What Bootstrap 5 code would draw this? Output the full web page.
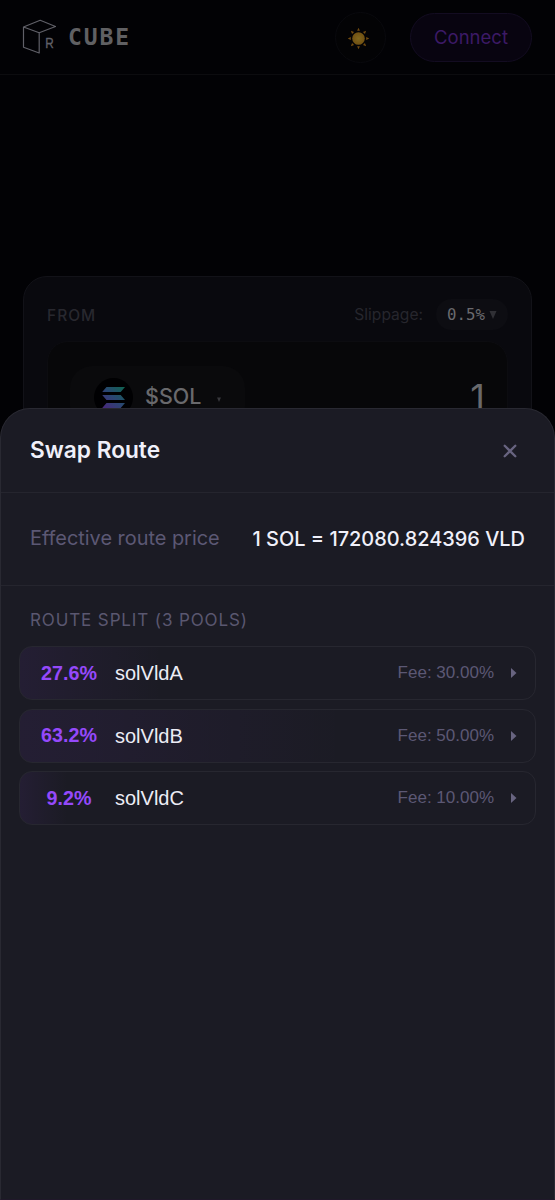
<!DOCTYPE html>
<html lang="en" data-bs-theme="dark">
<head>
<meta charset="utf-8">
<meta name="viewport" content="width=device-width, initial-scale=1">
<title>Cube – Swap Route</title>
<link rel="stylesheet" href="https://cdn.jsdelivr.net/npm/bootstrap@5.3.0/dist/css/bootstrap.min.css">
<style>
  body { font-family: Inter, "Liberation Sans", sans-serif; background: #020205; color: #717175; height: 1200px; overflow: hidden; }
  .topbar { height: 75px; padding: 0 23px 0 22px; border-bottom: 1px solid #0c0c0f; }
  .wordmark { font: bold 23px/1 "DejaVu Sans Mono", monospace; letter-spacing: 1.9px; color: #606063; margin-left: 11px; }
  .theme-btn { width: 51px; height: 51px; border: 1px solid #09090d; background: #030305; }
  .connect-btn { width: 122px; height: 49px; border: 1.5px solid #130c21; background: #080410; color: #3c1a66; font-size: 18.5px; padding: 2px 0 0; }
  .swap-panel { margin: 201px 23px 0; height: 330px; border: 1px solid #121218; border-radius: 24px; background: #09090e; padding: 22px 23px; }
  .from-label { font-size: 15.5px; font-weight: 500; letter-spacing: 1px; color: #28282f; padding-top: 2px; }
  .slip-label { font-size: 15.6px; color: #26262d; }
  .slip-pill { width: 72px; height: 31px; margin-left: 13px; background: #0d0d12; font: 15.7px/1 "DejaVu Sans Mono", monospace; color: #6a6a6e; }
  .token-box { margin-top: 11px; height: 180px; border: 1px solid #0c0c10; border-radius: 21px; background: #070709; padding: 24px 22px; }
  .token-pill { width: 175px; height: 62px; border-radius: 22px; background: #0a0a0c; padding-left: 24px; }
  .token-name { font-size: 21.5px; font-weight: 500; color: #69696c; margin-left: 12px; line-height: 1; }
  .amount { font-size: 36px; line-height: 62px; color: #69696c; }
  .sheet { height: 792px; border: 1px solid #292932; border-bottom: 1px solid #20182a; border-radius: 30px 30px 0 0; background: #1b1b24; }
  .sheet-head { height: 84px; padding: 0 36px 0 29px; border-bottom: 1.5px solid #25252e; }
  .sheet-head h1 { font-size: 22.7px; font-weight: 600; color: #f0f0fa; line-height: 1; }
  .price-row { height: 93px; padding: 0 29px; border-bottom: 1.5px solid #25252e; font-size: 19.9px; }
  .dim { color: #5c5874; }
  .price { color: #f0f0fa; font-weight: 500; padding-top: 1px; font-size: 19.95px; }
  .split-title { font-size: 17px; letter-spacing: .88px; line-height: 20px; margin: 24px 29px 16px; color: #5a5770; }
  .pools { margin: 0 18px; gap: 8.5px; font-family: "Liberation Sans", Arial, sans-serif; }
  .pool { height: 54px; border: 1.5px solid #272730; border-radius: 13px; padding: 0 18px 0 14px;
    background: linear-gradient(90deg, rgba(153,69,255,.07), rgba(153,69,255,0) var(--share)); }
  .pct { width: 70px; font-size: 19.7px; font-weight: 700; color: #9549fb; padding-top: 1px; }
  .pool-name { font-size: 20px; margin-left: 11px; color: #ececf5; }
  .fee { font-size: 17px; margin-right: 17px; }
</style>
</head>
<body>
<header class="topbar d-flex align-items-center">
  <svg width="35" height="36" viewBox="0 0 35 36" fill="none" stroke="#606068" stroke-width="1.2" stroke-linejoin="round">
    <path d="M1.5 8 18.2 1.3 33.5 7.5 17.2 13.8Z M1.5 8V28.2L17.2 34V13.8"/>
    <text x="23.2" y="28.5" font-family="Liberation Sans, sans-serif" font-size="14.5" textLength="8.5" lengthAdjust="spacingAndGlyphs" fill="#606068" stroke="#606068" stroke-width=".35">R</text>
  </svg>
  <span class="wordmark">CUBE</span>
  <div class="theme-btn rounded-circle d-flex align-items-center justify-content-center ms-auto">
    <svg width="22" height="22" viewBox="-11 -11 22 22" style="transform:translate(-2.5px,1.5px)">
      <defs><radialGradient id="sun"><stop stop-color="#80671f"/><stop offset="1" stop-color="#705012"/></radialGradient>
      <path id="ray" d="M-1.4-7.7H1.4L0-10.8Z"/></defs>
      <circle r="6.3" fill="url(#sun)"/>
      <g fill="#704a10"><use href="#ray"/><use href="#ray" transform="rotate(45)"/><use href="#ray" transform="rotate(90)"/><use href="#ray" transform="rotate(135)"/><use href="#ray" transform="rotate(180)"/><use href="#ray" transform="rotate(225)"/><use href="#ray" transform="rotate(270)"/><use href="#ray" transform="rotate(315)"/></g>
    </svg>
  </div>
  <button class="connect-btn rounded-pill ms-4">Connect</button>
</header>
<main class="swap-panel">
  <div class="d-flex align-items-center">
    <span class="from-label">FROM</span>
    <span class="slip-label ms-auto">Slippage:</span>
    <span class="slip-pill rounded-pill d-flex align-items-center justify-content-center gap-1">0.5%
      <svg width="8" height="8" viewBox="0 0 8 8"><path fill="#303035" d="M.5 0h7L4 8Z"/></svg></span>
  </div>
  <div class="token-box d-flex justify-content-between">
    <div class="token-pill d-flex align-items-center">
      <svg width="39" height="39" viewBox="0 0 39 39">
        <defs><linearGradient id="sol" gradientUnits="userSpaceOnUse" x1="30" y1="8" x2="9" y2="31"><stop stop-color="#0e6550"/><stop offset=".5" stop-color="#2a4672"/><stop offset="1" stop-color="#49267c"/></linearGradient></defs>
        <circle cx="19.5" cy="19.5" r="19.5" fill="#000002"/>
        <path fill="url(#sol)" d="M12.5 9H31L26.7 14H8.2ZM8.2 17H26.7L31 22H12.5ZM12.5 25H31L26.7 30H8.2Z"/>
      </svg>
      <span class="token-name">$SOL</span>
      <svg class="ms-3 mt-1" width="4" height="5" viewBox="0 0 4 5"><path fill="#38383c" d="M0 .5h4L2 5Z"/></svg>
    </div>
    <span class="amount">1</span>
  </div>
</main>
<section class="sheet fixed-bottom">
  <div class="sheet-head d-flex align-items-center justify-content-between">
    <h1 class="m-0">Swap Route</h1>
    <svg width="16" height="16" viewBox="0 0 16 16" stroke="#686480" stroke-width="2.3" stroke-linecap="round"><path d="m2.7 2.7 10.6 10.6m0-10.6L2.7 13.3"/></svg>
  </div>
  <div class="price-row d-flex align-items-center justify-content-between text-nowrap">
    <span class="dim">Effective route price</span><span class="price">1 SOL = 172080.824396 VLD</span>
  </div>
  <h2 class="split-title fw-normal">ROUTE SPLIT (3 POOLS)</h2>
  <div class="pools d-flex flex-column">
    <div class="pool d-flex align-items-center" style="--share:27.6%"><span class="pct text-center">27.6%</span><span class="pool-name">solVldA</span><span class="fee dim ms-auto">Fee: 30.00%</span><svg width="6" height="10" viewBox="0 0 6 10"><path fill="#686480" d="M0 0 5.5 5 0 10Z"/></svg></div>
    <div class="pool d-flex align-items-center" style="--share:63.2%"><span class="pct text-center">63.2%</span><span class="pool-name">solVldB</span><span class="fee dim ms-auto">Fee: 50.00%</span><svg width="6" height="10" viewBox="0 0 6 10"><path fill="#686480" d="M0 0 5.5 5 0 10Z"/></svg></div>
    <div class="pool d-flex align-items-center" style="--share:9.2%"><span class="pct text-center">9.2%</span><span class="pool-name">solVldC</span><span class="fee dim ms-auto">Fee: 10.00%</span><svg width="6" height="10" viewBox="0 0 6 10"><path fill="#686480" d="M0 0 5.5 5 0 10Z"/></svg></div>
  </div>
</section>
<script src="https://cdn.jsdelivr.net/npm/bootstrap@5.3.0/dist/js/bootstrap.bundle.min.js"></script>
</body>
</html>
